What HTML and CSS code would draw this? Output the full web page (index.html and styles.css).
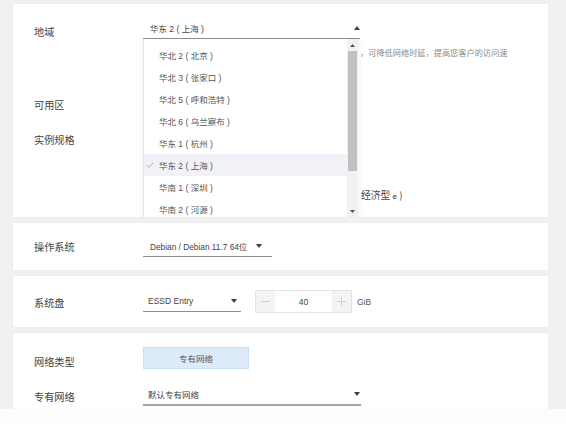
FILE: index.html
```html
<!DOCTYPE html>
<html lang="zh-CN">
<head>
<meta charset="utf-8">
<title>创建实例</title>
<link rel="stylesheet" href="styles.css">
</head>
<body>
<main class="page">
  <section class="card card-region">
    <div class="row row-region">
      <div class="label label-region">地域</div>
      <div class="field">
        <div class="select select-region">
          <span>华东 2 ( 上海 )</span>
          <svg class="caret" width="6" height="4" viewBox="0 0 6 4"><path d="M0 4L3 0L6 4Z"/></svg>
        </div>
        <p class="desc">，可降低网络时延，提高您客户的访问速</p>
      </div>
    </div>
    <div class="row row-zone">
      <div class="label">可用区</div>
      <div class="field"></div>
    </div>
    <div class="row row-spec">
      <div class="label">实例规格</div>
      <div class="field">
        <div class="spec-tail">经济型 <span class="spec-icon">e</span> )</div>
      </div>
    </div>

    <div class="dropdown">
      <ul class="options">
        <li class="option"><span class="check"></span>华北 2 ( 北京 )</li>
        <li class="option"><span class="check"></span>华北 3 ( 张家口 )</li>
        <li class="option"><span class="check"></span>华北 5 ( 呼和浩特 )</li>
        <li class="option"><span class="check"></span>华北 6 ( 乌兰察布 )</li>
        <li class="option"><span class="check"></span>华东 1 ( 杭州 )</li>
        <li class="option is-selected"><span class="check"><svg width="8" height="6" viewBox="0 0 8 6"><path d="M0.6 3.2L2.8 5.3L7.4 0.7" fill="none" stroke="#a9a9a9" stroke-width="0.9"/></svg></span>华东 2 ( 上海 )</li>
        <li class="option"><span class="check"></span>华南 1 ( 深圳 )</li>
        <li class="option"><span class="check"></span>华南 2 ( 河源 )</li>
      </ul>
      <div class="scrollbar">
        <div class="sb-arrow"><svg width="5" height="3" viewBox="0 0 5 3"><path d="M0 3L2.5 0L5 3Z"/></svg></div>
        <div class="sb-thumb"></div>
        <div class="sb-arrow sb-down"><svg width="5" height="3" viewBox="0 0 5 3"><path d="M0 0L5 0L2.5 3Z"/></svg></div>
      </div>
    </div>
  </section>

  <section class="card card-os">
    <div class="row">
      <div class="label label-os">操作系统</div>
      <div class="field">
        <div class="select select-os">
          <span>Debian / Debian 11.7 64位</span>
          <svg class="caret" width="6" height="4" viewBox="0 0 6 4"><path d="M0 0L6 0L3 4Z"/></svg>
        </div>
      </div>
    </div>
  </section>

  <section class="card card-disk">
    <div class="row">
      <div class="label label-disk">系统盘</div>
      <div class="field field-disk">
        <div class="select select-disk">
          <span>ESSD Entry</span>
          <svg class="caret" width="6" height="4" viewBox="0 0 6 4"><path d="M0 0L6 0L3 4Z"/></svg>
        </div>
        <div class="stepper">
          <span class="step-btn">
            <svg width="9" height="1" viewBox="0 0 9 1"><rect width="9" height="1" fill="#cfcfcf"/></svg>
          </span>
          <span class="step-value">40</span>
          <span class="step-btn">
            <svg width="9" height="9" viewBox="0 0 9 9"><rect x="4" width="1" height="9" fill="#cfcfcf"/><rect y="4" width="9" height="1" fill="#cfcfcf"/></svg>
          </span>
        </div>
        <span class="unit">GiB</span>
      </div>
    </div>
  </section>

  <section class="card card-net">
    <div class="row">
      <div class="label label-nettype">网络类型</div>
      <div class="field">
        <div class="net-btn">专有网络</div>
      </div>
    </div>
    <div class="row row-vpc">
      <div class="label label-vpc">专有网络</div>
      <div class="field">
        <div class="select select-vpc">
          <span>默认专有网络</span>
          <svg class="caret" width="6" height="4" viewBox="0 0 6 4"><path d="M0 0L6 0L3 4Z"/></svg>
        </div>
      </div>
    </div>
  </section>
</main>
<div class="footer-strip"></div>
</body>
</html>
```

FILE: styles.css
```css
* {
  box-sizing: border-box;
  margin: 0;
  padding: 0;
}

body {
  width: 566px;
  height: 424px;
  overflow: hidden;
  background: #f1f1f2;
  font-family: "Liberation Sans", "Noto Sans CJK SC", sans-serif;
  color: #444;
}

.page {
  display: flex;
  flex-direction: column;
  gap: 6px;
  padding: 4px 18px 0 13px;
}

.card {
  background: #fff;
  box-shadow: 0 0 2px rgba(0, 0, 0, 0.05);
  padding-left: 21px;
}

.row {
  display: flex;
}

.label {
  width: 109px;
  flex: none;
  font-family: "Noto Sans CJK SC", sans-serif;
  font-size: 10.2px;
  line-height: 16px;
  color: #444;
}

.field {
  flex: 1;
  min-width: 0;
}

.select {
  display: flex;
  align-items: center;
  justify-content: space-between;
  height: 21px;
  border-bottom: 1px solid #8f8f8f;
  font-size: 8.5px;
  color: #444;
}

.caret {
  flex: none;
  fill: #3f3f3f;
}

/* ---------- region card ---------- */
.card-region {
  position: relative;
  height: 213px;
  padding-top: 14px;
  overflow: hidden;
}

.label-region {
  padding-top: 6px;
}

.select-region {
  width: 217px;
  padding: 0 0 0 7px;
}

.desc {
  margin: 7px 0 0 217px;
  font-family: "Noto Sans CJK SC", sans-serif;
  font-size: 8.2px;
  line-height: 12px;
  color: #8a8a8a;
  white-space: nowrap;
}

.row-zone {
  margin-top: 39px;
}

.row-spec {
  margin-top: 19px;
}

.spec-tail {
  margin: 55px 0 0 218px;
  font-family: "Noto Sans CJK SC", sans-serif;
  font-size: 9.8px;
  line-height: 16px;
  color: #444;
}

.spec-icon {
  display: inline-block;
  font-family: "Liberation Sans", sans-serif;
  font-size: 8px;
  font-weight: bold;
  color: #555;
}

/* dropdown overlay */
.dropdown {
  position: absolute;
  left: 130px;
  top: 35px;
  width: 215px;
  height: 178px;
  display: flex;
  background: #fff;
  border-left: 1px solid #e3e3e3;
  box-shadow: 0 2px 6px rgba(0, 0, 0, 0.08);
}

.options {
  flex: 1;
  list-style: none;
  padding-top: 5px;
}

.option {
  display: flex;
  align-items: center;
  height: 22px;
  padding-left: 2px;
  font-size: 8.5px;
  color: #555;
}

.option.is-selected {
  background: #f1f2f8;
}

.check {
  display: flex;
  align-items: center;
  width: 13px;
  flex: none;
}

.scrollbar {
  width: 11px;
  flex: none;
  display: flex;
  flex-direction: column;
  background: #f1f1f1;
}

.sb-arrow {
  height: 12px;
  flex: none;
  display: flex;
  align-items: center;
  justify-content: center;
  fill: #555;
}

.sb-thumb {
  height: 120px;
  margin: 0 1px;
  background: #c1c1c1;
}

.sb-down {
  margin-top: auto;
}

/* ---------- OS card ---------- */
.card-os {
  height: 47px;
  padding-top: 13px;
}

.label-os {
  padding-top: 3px;
}

.select-os {
  width: 129px;
  padding: 0 10px 0 7px;
  font-size: 8.3px;
}

/* ---------- disk card ---------- */
.card-disk {
  height: 51px;
  padding-top: 14px;
}

.label-disk {
  padding-top: 5px;
}

.field-disk {
  display: flex;
  align-items: center;
  height: 23px;
}

.select-disk {
  width: 98px;
  padding: 0 4px 0 5px;
}

.stepper {
  display: flex;
  width: 97px;
  height: 23px;
  margin-left: 14px;
  border: 1px solid #e4e4e4;
}

.step-btn {
  width: 19px;
  flex: none;
  display: flex;
  align-items: center;
  justify-content: center;
  background: #f3f3f3;
}

.step-value {
  flex: 1;
  display: flex;
  align-items: center;
  justify-content: center;
  font-size: 8.5px;
  color: #444;
}

.unit {
  margin-left: 5px;
  font-size: 8.5px;
  color: #555;
}

/* ---------- network card ---------- */
.card-net {
  height: 76px;
  padding-top: 14px;
}

.label-nettype {
  padding-top: 7px;
}

.net-btn {
  width: 106px;
  height: 22px;
  display: flex;
  align-items: center;
  justify-content: center;
  background: #dcebf7;
  border: 1px solid #c9dfef;
  font-family: "Noto Sans CJK SC", sans-serif;
  font-size: 8.5px;
  color: #555;
}

.row-vpc {
  margin-top: 13px;
}

.label-vpc {
  padding-top: 6px;
}

.select-vpc {
  width: 218px;
  height: 23px;
  padding: 0 1px 0 5px;
  border-bottom: 2px solid #a3a3a3;
}

.footer-strip {
  height: 15px;
  background: #fdfdfd;
}
```
